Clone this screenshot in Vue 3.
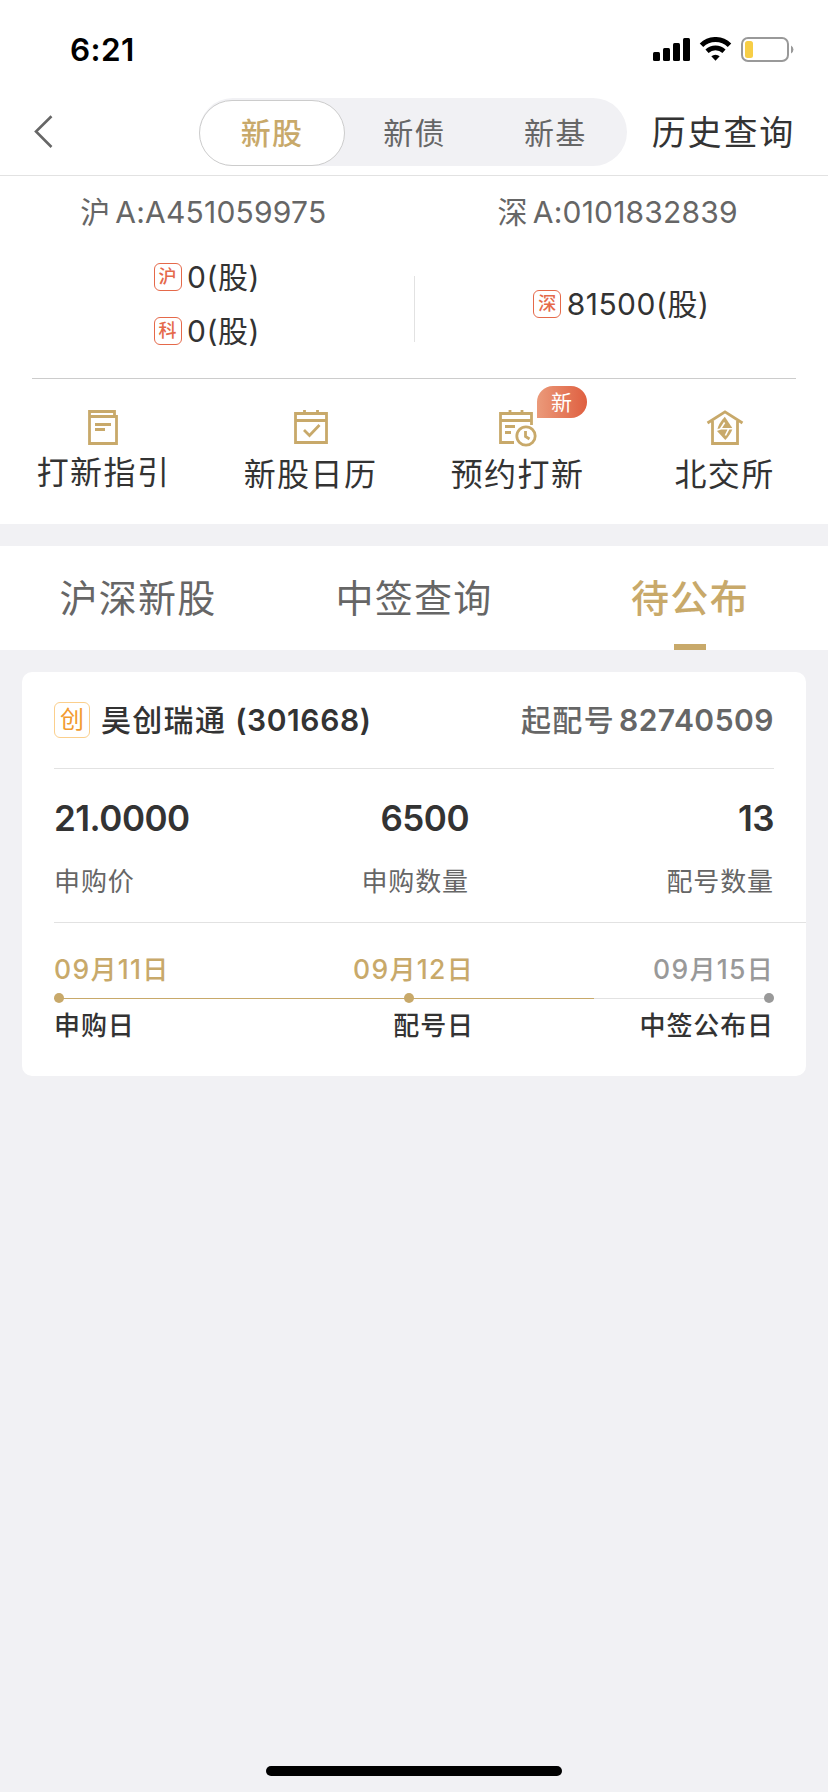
<script setup>

import { ref } from 'vue'

const segments = ['新股', '新债', '新基']
const activeSegment = ref('新股')

const tabs = ['沪深新股', '中签查询', '待公布']
const activeTab = ref('待公布')

const menus = [
    { id: 'guide', name: '打新指引' },
    { id: 'calendar', name: '新股日历' },
    { id: 'booking', name: '预约打新', badge: '新' },
    { id: 'bse', name: '北交所' }
]

const stock = {
    name: '昊创瑞通',
    code: '301668',
    startNo: '82740509',
    figures: [
        { value: '21.0000', label: '申购价' },
        { value: '6500', label: '申购数量' },
        { value: '13', label: '配号数量' }
    ],
    progress: 75,
    steps: [
        { month: '09', day: '11', label: '申购日', done: true, pos: 0 },
        { month: '09', day: '12', label: '配号日', done: true, pos: 350 },
        { month: '09', day: '15', label: '中签公布日', done: false, pos: 710 }
    ]
}

</script>

<template>
    <div class="page">
        <div class="statusBar">
            <span class="time">6:21</span>
            <svg class="statusIcons" width="142" height="26" viewBox="0 0 142 26">
                <rect x="0" y="15" width="7" height="9" rx="1.5" />
                <rect x="10" y="11" width="7" height="13" rx="1.5" />
                <rect x="20" y="6" width="7" height="18" rx="1.5" />
                <rect x="30" y="1" width="7" height="23" rx="1.5" />
                <path d="M48.5 8.2 A20 20 0 0 1 76.5 8.2" fill="none" stroke="#000" stroke-width="5" />
                <path d="M54 14.2 A12.5 12.5 0 0 1 71 14.2" fill="none" stroke="#000" stroke-width="4.6" />
                <path d="M58.3 19.3 A6.2 6.2 0 0 1 66.7 19.3 L62.5 23.8 Z" />
                <rect x="89" y="1" width="46" height="23" rx="6" fill="none" stroke="#999" stroke-width="2" />
                <rect x="92" y="4" width="8" height="17" rx="2.5" fill="#f7ce46" />
                <path d="M138 8.5 a4.5 4.5 0 0 1 0 8 Z" fill="#999" />
            </svg>
        </div>

        <div class="nav">
            <svg class="back" width="20" height="36" viewBox="0 0 20 36">
                <path d="M18.5 2.2 L3 17.5 L18.5 33" fill="none" stroke="#666" stroke-width="2.6" />
            </svg>
            <div class="segment">
                <button v-for="s in segments" :key="s" :class="{ active: s == activeSegment }" @click="activeSegment = s">{{ s }}</button>
            </div>
            <a class="history">历史查询</a>
        </div>

        <div class="accounts">
            <div class="account">
                <p class="accountNo"><span class="market">沪</span>A:A451059975</p>
                <div class="quotas">
                    <p class="quota"><i>沪</i><span>0(股)</span></p>
                    <p class="quota"><i>科</i><span>0(股)</span></p>
                </div>
            </div>
            <div class="split"></div>
            <div class="account">
                <p class="accountNo"><span class="market">深</span>A:0101832839</p>
                <div class="quotas">
                    <p class="quota"><i>深</i><span>81500(股)</span></p>
                </div>
            </div>
        </div>

        <div class="menus">
            <div v-for="m in menus" :key="m.id" class="menu" :class="m.id">
                <div class="menuIcon">
                    <svg v-if="m.id == 'guide'" width="32" height="35" viewBox="0 0 32 35">
                        <path d="M1.5 6 V1.5 H26.5 V6 M1.5 6.5 H28.5 V33.5 H1.5 Z" />
                        <path d="M7 14.5 H23 M7 19.5 H17" />
                    </svg>
                    <svg v-else-if="m.id == 'calendar'" width="34" height="35" viewBox="0 0 34 35">
                        <path d="M1.5 3.5 H32.5 V32.5 H1.5 Z M1.5 10.5 H32.5 M10.5 0 V4 M23.5 0 V4" />
                        <path d="M10 20 L15.5 25.5 L25.5 15" />
                    </svg>
                    <svg v-else-if="m.id == 'booking'" width="38" height="37" viewBox="0 0 38 37">
                        <path d="M32.5 15 V3.5 H1.5 V32.5 H15 M1.5 10.5 H32.5 M11 0 V4 M23 0 V4" />
                        <path d="M6 16.5 H16 M6 22.5 H12" />
                        <circle cx="27" cy="26" r="9.2" />
                        <path d="M26.5 21 V26.5 L30.5 29" />
                    </svg>
                    <svg v-else width="38" height="35" viewBox="0 0 38 35">
                        <path d="M1.5 13 L19 1.8 L36.5 13 M6.5 11 V33.5 H31.5 V11" />
                        <path class="solid" d="M18.8 6.8 L26.6 18.5 Q25 24 19.3 30 L11 21 Q12 14 18.8 6.8 Z" />
                        <path class="bolt" d="M18.6 12.5 L14.6 18.7 H22.8 L19.4 25.5 M10.5 20.3 L15 18.7 M27 18.8 L22 18.8" />
                    </svg>
                    <span v-if="m.badge" class="badge">{{ m.badge }}</span>
                </div>
                <span class="menuName">{{ m.name }}</span>
            </div>
        </div>

        <div class="tabs">
            <div v-for="t in tabs" :key="t" class="tab" :class="{ active: t == activeTab }" @click="activeTab = t">{{ t }}</div>
        </div>

        <div class="card">
            <div class="cardHead">
                <i class="board">创</i>
                <span class="name">{{ stock.name }}</span>
                <span class="code">({{ stock.code }})</span>
                <span class="startLabel">起配号</span>
                <span class="startNo">{{ stock.startNo }}</span>
            </div>
            <div class="figures">
                <div v-for="f in stock.figures" :key="f.label" class="figure">
                    <strong>{{ f.value }}</strong>
                    <span>{{ f.label }}</span>
                </div>
            </div>
            <div class="schedule">
                <div class="dates">
                    <span v-for="s in stock.steps" :key="s.label" :class="{ pending: !s.done }">{{ s.month }}<b>月</b>{{ s.day }}<b>日</b></span>
                </div>
                <div class="line">
                    <div class="lineDone" :style="{ width: stock.progress + '%' }"></div>
                    <i v-for="s in stock.steps" :key="s.label" class="dot" :class="{ pending: !s.done }" :style="{ left: s.pos + 'px' }"></i>
                </div>
                <div class="stepNames">
                    <span v-for="s in stock.steps" :key="s.label">{{ s.label }}</span>
                </div>
            </div>
        </div>

        <div class="homeBar"></div>
    </div>
</template>

<style>
body {
    margin: 0;
    background-color: #f1f1f4;
}
</style>

<style scoped>

.page {
    width: 828px;
    height: 1792px;
    display: flex;
    flex-direction: column;
    overflow: hidden;
    background-color: #f1f1f4;
    color: #333;
    font-family: Inter, "Noto Sans CJK SC", sans-serif;
}

p {
    margin: 0;
}

i {
    font-style: normal;
}

.statusBar {
    height: 88px;
    box-sizing: border-box;
    padding: 36px 33px 0 70px;
    display: flex;
    justify-content: space-between;
    background-color: #fff;
}

.time {
    font-size: 31.5px;
    line-height: 27px;
    font-weight: 600;
    letter-spacing: 0.4px;
    color: #000;
}

.statusIcons {
    margin-top: 1px;
}

.nav {
    height: 88px;
    box-sizing: border-box;
    padding: 10px 33px 9px 33px;
    display: flex;
    border-bottom: 1px solid #e2e2e2;
    background-color: #fff;
}

.back {
    margin: 16px 146px 0 0;
}

.segment {
    width: 428px;
    height: 68px;
    display: flex;
    align-items: flex-end;
    border-radius: 34px;
    background-color: #f1f1f4;
}

.segment button {
    flex: 1;
    height: 66px;
    padding: 0 2px 0 0;
    border: none;
    border-radius: 33px;
    background: none;
    color: #666;
    font-family: inherit;
    font-size: 30px;
    line-height: 62px;
    letter-spacing: 1.3px;
}

.segment .active {
    flex: 0 0 146px;
    box-sizing: border-box;
    padding: 0;
    border: 1px solid #ccc;
    background-color: #fff;
    color: #c8a96a;
    font-weight: 500;
}

.history {
    margin-left: 25px;
    font-size: 34px;
    line-height: 70px;
    letter-spacing: 1.8px;
    white-space: nowrap;
}

.accounts {
    height: 202px;
    display: flex;
    background-color: #fff;
}

.account {
    flex: 1;
    display: flex;
    flex-direction: column;
    align-items: center;
}

.accountNo {
    margin: 16px 0 15px;
    padding-right: 7px;
    font-size: 30px;
    line-height: 40px;
    color: #666;
    letter-spacing: 0.2px;
    white-space: nowrap;
}

.market {
    margin-right: 5px;
}

.quotas {
    height: 114px;
    display: flex;
    flex-direction: column;
    justify-content: center;
    gap: 14px;
    padding-bottom: 3px;
}

.quota {
    display: flex;
    align-items: center;
    font-size: 30px;
    line-height: 40px;
    letter-spacing: 0.5px;
}

.quota i {
    width: 28px;
    height: 28px;
    box-sizing: border-box;
    margin-right: 5.5px;
    border: 1.5px solid #e5694a;
    border-radius: 6px;
    color: #e5694a;
    font-size: 18px;
    font-weight: 500;
    line-height: 25px;
    letter-spacing: 0;
    text-align: center;
}

.split {
    width: 1px;
    height: 66px;
    margin-top: 100px;
    background-color: #e2e2e2;
}

.menus {
    height: 146px;
    display: flex;
    position: relative;
    background-color: #fff;
}

.menus::before {
    content: "";
    position: absolute;
    left: 32px;
    right: 32px;
    top: 0;
    height: 1px;
    background-color: #ccc;
}

.menu {
    flex: 1;
    display: flex;
    flex-direction: column;
    align-items: center;
}

.menuIcon {
    position: relative;
    height: 37px;
    margin-top: 32px;
}

.menuIcon svg {
    display: block;
    fill: none;
    stroke: #c8a96a;
    stroke-width: 2.8;
}

.menuIcon .solid {
    fill: #c8a96a;
    stroke: none;
}

.menuIcon .bolt {
    stroke: #fff;
    stroke-width: 1.6;
}

.menuName {
    margin-top: 4px;
    font-size: 32px;
    line-height: 48px;
    letter-spacing: 1.4px;
}

.guide .menuName {
    margin-top: 2px;
}

.badge {
    position: absolute;
    left: 38px;
    top: -24px;
    width: 50px;
    height: 32px;
    border-radius: 16px 16px 16px 0;
    background: linear-gradient(90deg, #eb9a7a, #df5f40);
    color: #fff;
    font-size: 21px;
    line-height: 34px;
    text-align: center;
}

.tabs {
    height: 104px;
    margin-top: 22px;
    display: flex;
    background-color: #fff;
}

.tab {
    flex: 1;
    display: flex;
    flex-direction: column;
    align-items: center;
    color: #666;
    font-size: 38px;
    line-height: 104px;
    letter-spacing: 1.3px;
}

.tab.active {
    color: #c8a96a;
    font-weight: 500;
}

.tab.active::after {
    content: "";
    width: 32px;
    height: 6px;
    margin-top: -6px;
    background-color: #c8a96a;
}

.card {
    height: 404px;
    box-sizing: border-box;
    margin: 22px 22px 0;
    padding-left: 32px;
    border-radius: 10px;
    background-color: #fff;
}

.cardHead {
    width: 720px;
    height: 97px;
    box-sizing: border-box;
    display: flex;
    align-items: center;
    border-bottom: 1px solid #e2e2e2;
    font-size: 30px;
    font-weight: 500;
    line-height: 40px;
    letter-spacing: 1.3px;
    white-space: nowrap;
}

.board {
    width: 36px;
    height: 36px;
    box-sizing: border-box;
    margin-right: 11px;
    border: 1px solid #fbcf8c;
    border-radius: 6px;
    color: #f29a2e;
    font-size: 24px;
    font-weight: 400;
    line-height: 34px;
    letter-spacing: 0;
    text-align: center;
}

.code {
    margin-left: 9px;
    font-weight: 600;
    letter-spacing: 0.6px;
}

.startLabel {
    margin-left: auto;
    margin-right: 4px;
    color: #666;
}

.startNo {
    color: #666;
    font-weight: 600;
    letter-spacing: 0.5px;
}

.figures {
    height: 154px;
    box-sizing: border-box;
    display: grid;
    grid-template-columns: 208px 207px 305px;
    border-bottom: 1px solid #e2e2e2;
}

.figure {
    display: flex;
    flex-direction: column;
    align-items: flex-end;
}

.figure:first-child {
    align-items: flex-start;
}

.figure strong {
    margin-top: 29px;
    font-size: 35px;
    line-height: 40px;
    font-weight: 600;
    letter-spacing: -0.5px;
}

.figure span {
    margin-top: 26px;
    color: #666;
    font-size: 26px;
    line-height: 36px;
    letter-spacing: 0.9px;
}

.schedule {
    width: 720px;
    padding-top: 28px;
}

.dates,
.stepNames {
    display: grid;
    grid-template-columns: 210px 210px 300px;
    line-height: 36px;
    font-weight: 500;
}

.dates {
    color: #c8a96a;
    font-size: 26.5px;
    letter-spacing: 1.3px;
}

.dates b {
    font-weight: 500;
    font-size: 26px;
}

.dates .pending {
    color: #999;
}

.dates span + span,
.stepNames span + span {
    text-align: right;
}

.line {
    position: relative;
    height: 1px;
    margin: 10px 0 9px;
    background-color: #e2e2e2;
}

.lineDone {
    height: 1px;
    background-color: #c8a96a;
}

.dot {
    position: absolute;
    top: -5px;
    width: 10px;
    height: 10px;
    border-radius: 50%;
    background-color: #c8a96a;
}

.dot.pending {
    background-color: #999;
}

.stepNames {
    font-size: 26px;
    letter-spacing: 0.9px;
}

.homeBar {
    width: 296px;
    height: 10px;
    margin: auto auto 16px;
    border-radius: 5px;
    background-color: #000;
}

</style>
